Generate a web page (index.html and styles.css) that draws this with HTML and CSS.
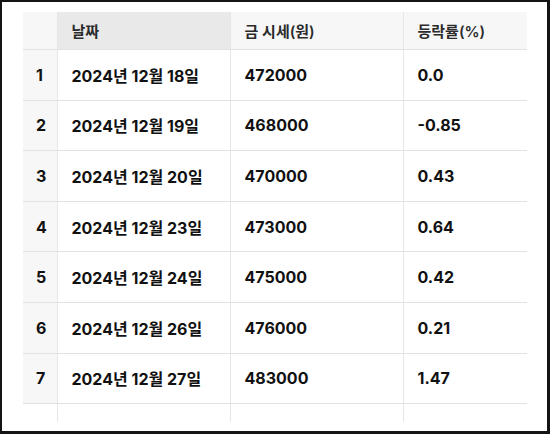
FILE: index.html
```html
<!DOCTYPE html>
<html lang="ko">
<head>
<meta charset="utf-8">
<link rel="stylesheet" href="styles.css">
</head>
<body>
<div class="frame">
  <div class="scroller">
    <table class="grid">
      <colgroup>
        <col class="c-idx"><col class="c-date"><col class="c-price"><col class="c-rate">
      </colgroup>
      <thead>
        <tr>
          <th class="idx"></th>
          <th class="active">날짜</th>
          <th>금 시세(원)</th>
          <th>등락률(%)</th>
        </tr>
      </thead>
      <tbody>
        <tr><td class="idx">1</td><td>2024년 12월 18일</td><td>472000</td><td>0.0</td></tr>
        <tr><td class="idx">2</td><td>2024년 12월 19일</td><td>468000</td><td>-0.85</td></tr>
        <tr><td class="idx">3</td><td>2024년 12월 20일</td><td>470000</td><td>0.43</td></tr>
        <tr><td class="idx">4</td><td>2024년 12월 23일</td><td>473000</td><td>0.64</td></tr>
        <tr><td class="idx">5</td><td>2024년 12월 24일</td><td>475000</td><td>0.42</td></tr>
        <tr><td class="idx">6</td><td>2024년 12월 26일</td><td>476000</td><td>0.21</td></tr>
        <tr><td class="idx">7</td><td>2024년 12월 27일</td><td>483000</td><td>1.47</td></tr>
        <tr class="empty"><td class="idx blank"></td><td></td><td></td><td></td></tr>
      </tbody>
    </table>
  </div>
</div>
</body>
</html>
```

FILE: styles.css
```css
html, body {
  margin: 0;
  padding: 0;
  background: #ffffff;
}

.frame {
  box-sizing: border-box;
  width: 550px;
  height: 434px;
  border-style: solid;
  border-color: #141414;
  border-width: 2px 3px 3px 2px;
  padding: 10px 0 0 21px;
  background: #ffffff;
  font-family: Inter, "Noto Sans CJK KR", sans-serif;
}

.scroller {
  width: 504px;
  height: 410px;
  overflow: hidden;
}

.grid {
  width: 504px;
  border-collapse: collapse;
  table-layout: fixed;
  font-size: 16px;
  color: #111111;
}

.c-idx { width: 34px; }
.c-date { width: 173px; }
.c-price { width: 173px; }
.c-rate { width: 124px; }

.grid th {
  height: 37px;
  padding: 0 0 0 14px;
  text-align: left;
  font-size: 15px;
  font-weight: 600;
  color: #2b2b2b;
  background: #f7f7f7;
  border-bottom: 1px solid #e2e2e2;
  border-left: 1px solid #e6e6e6;
  vertical-align: middle;
}

.grid th.active {
  background: #e9e9e9;
}

.grid td {
  height: 49.6px;
  padding: 0 0 0 14px;
  font-weight: 700;
  border-bottom: 1px solid #e2e2e2;
  border-left: 1px solid #e6e6e6;
  vertical-align: middle;
  white-space: nowrap;
}

.grid th:first-child,
.grid td:first-child {
  border-left: none;
}

.grid td.idx {
  background: #f7f7f7;
  padding-left: 13px;
}

.grid td.blank {
  background: #ffffff;
}
```
